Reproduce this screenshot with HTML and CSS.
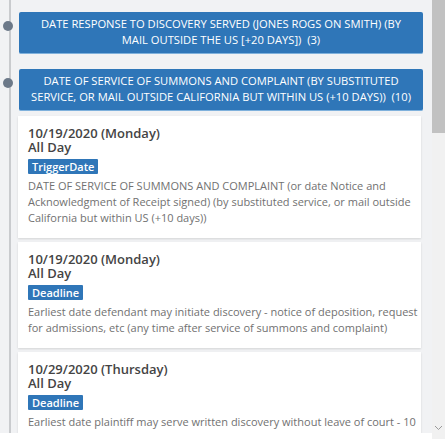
FILE: index.html
```html
<!DOCTYPE html>
<html>
<head>
<meta charset="utf-8">
<link rel="stylesheet" href="styles.css">
</head>
<body>
<div class="frame">
  <div class="viewport">
    <div class="timeline">
      <div class="group">
        <span class="dot"></span>
        DATE RESPONSE TO DISCOVERY SERVED (JONES ROGS ON SMITH) (BY MAIL OUTSIDE THE US [+20 DAYS])&nbsp; (3)
      </div>
      <div class="group">
        <span class="dot"></span>
        DATE OF SERVICE OF SUMMONS AND COMPLAINT (BY SUBSTITUTED SERVICE, OR MAIL OUTSIDE CALIFORNIA BUT WITHIN US (+10 DAYS))&nbsp; (10)
      </div>
      <div class="cards">
        <div class="card">
          <div class="date">10/19/2020 (Monday)</div>
          <div class="date">All Day</div>
          <span class="badge">TriggerDate</span>
          <p class="desc">DATE OF SERVICE OF SUMMONS AND COMPLAINT (or date Notice and Acknowledgment of Receipt signed) (by substituted service, or mail outside California but within US (+10 days))</p>
        </div>
        <div class="card">
          <div class="date">10/19/2020 (Monday)</div>
          <div class="date">All Day</div>
          <span class="badge">Deadline</span>
          <p class="desc">Earliest date defendant may initiate discovery - notice of deposition, request for admissions, etc (any time after service of summons and complaint)</p>
        </div>
        <div class="card">
          <div class="date">10/29/2020 (Thursday)</div>
          <div class="date">All Day</div>
          <span class="badge">Deadline</span>
          <p class="desc">Earliest date plaintiff may serve written discovery without leave of court - 10 days after service of summons and complaint. Note: plaintiff may serve earlier</p>
        </div>
      </div>
    </div>
  </div>
  <div class="scrollbar">
    <div class="thumb"></div>
    <div class="arrow">
      <svg width="9" height="6" viewBox="0 0 9 6"><path d="M1 1 L4.5 4.5 L8 1" fill="none" stroke="#9a9a9a" stroke-width="1"/></svg>
    </div>
  </div>
</div>
</body>
</html>
```

FILE: styles.css
```css
* { box-sizing: border-box; }
html, body {
  margin: 0;
  padding: 0;
  background: #ffffff;
}
body {
  font-family: "Open Sans", "Noto Sans", sans-serif;
  width: 445px;
  height: 439px;
  overflow: hidden;
}
.frame {
  display: flex;
  height: 439px;
}
.viewport {
  width: 432px;
  height: 433px;
  overflow: hidden;
  background: #f1f2f4;
}
.timeline {
  margin-left: 9px;
  border-left: 2px solid #c9cbce;
  padding: 12px 9px 0 8px;
  min-height: 433px;
}
.group {
  position: relative;
  background: #2f76b8;
  color: #ffffff;
  font-size: 11.2px;
  line-height: 16px;
  text-align: center;
  padding: 4px 12px 5px;
  margin-bottom: 15px;
  border-radius: 2px;
  border-bottom: 1px solid #7fb1dc;
}
.group:nth-child(2) { margin-bottom: 5px; }
.dot {
  position: absolute;
  left: -16px;
  top: 9px;
  width: 10px;
  height: 10px;
  border-radius: 50%;
  background: #6c7989;
}
.cards {
  display: flex;
  flex-direction: column;
  gap: 4px;
  margin-right: 2px;
  margin-left: -1px;
}
.card {
  background: #ffffff;
  padding: 10px 0 12px 10px;
  box-shadow: 0 1px 2px rgba(0,0,0,0.12);
}
.date {
  font-size: 13px;
  font-weight: 600;
  line-height: 14px;
  color: #444444;
}
.badge {
  display: block;
  width: fit-content;
  margin-top: 5px;
  background: #2f76b8;
  color: #ffffff;
  font-size: 11px;
  font-weight: 600;
  line-height: 15px;
  padding: 0 4px;
  border-radius: 1px;
}
.desc {
  margin: 4px 0 0;
  font-size: 11px;
  line-height: 16px;
  color: #717171;
}
.scrollbar {
  width: 13px;
  height: 439px;
  background: #f1f1f1;
  display: flex;
  flex-direction: column;
  justify-content: space-between;
}
.thumb {
  height: 133px;
  background: #c1c1c1;
}
.arrow {
  height: 14px;
  display: flex;
  align-items: flex-start;
  justify-content: center;
}
```
